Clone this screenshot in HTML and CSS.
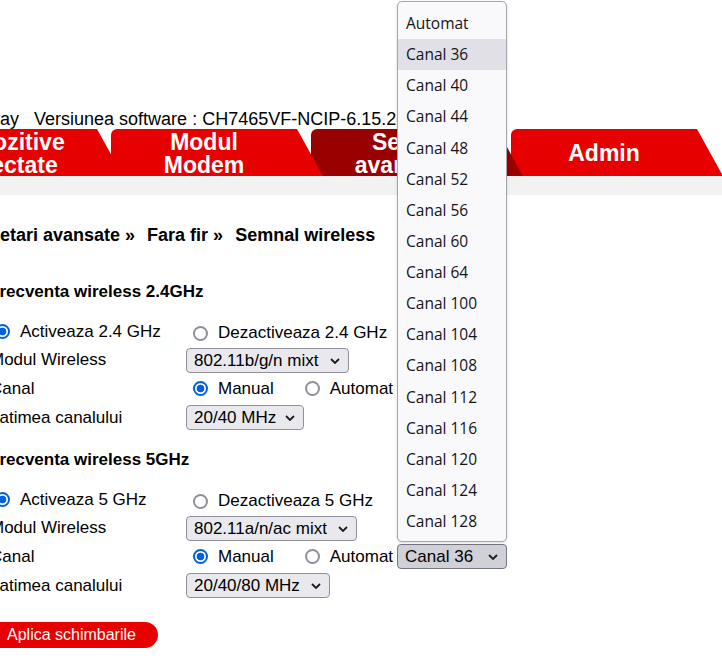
FILE: index.html
```html
<!DOCTYPE html>
<html lang="ro">
<head>
  <meta charset="UTF-8">
  <title>Semnal wireless</title>
  <link rel="stylesheet" href="styles.css">
</head>
<body>
  <div class="version">Gateway&nbsp;&nbsp;&nbsp;Versiunea software : CH7465VF-NCIP-6.15.28.109-NOSH</div>

  <nav class="tabs">
    <a class="tab t1">Dispozitive<br>conectate</a>
    <a class="tab t2">Modul<br>Modem</a>
    <a class="tab t3 active">Setari<br>avansate</a>
    <a class="tab t4 single">Admin</a>
  </nav>
  <div class="band"></div>

  <main class="content">
    <div class="crumbs">Setari avansate »<span class="sp"></span>Fara fir »<span class="sp"></span>Semnal wireless</div>

    <!-- 2.4 GHz -->
    <h3 class="freq first">Frecventa wireless 2.4GHz</h3>
    <div class="row r-radio">
      <div class="lbl"><label class="opt"><input type="radio" name="en24" checked>Activeaza 2.4 GHz</label></div>
      <label class="opt"><input type="radio" name="en24">Dezactiveaza 2.4 GHz</label>
    </div>
    <div class="row r-sel">
      <div class="lbl">Modul Wireless</div>
      <span class="sel"><select><option>802.11b/g/n mixt</option></select><svg class="chev" width="10" height="6" viewBox="0 0 10 6"><polyline points="1,1 5,5 9,1" fill="none" stroke="#1c1b22" stroke-width="1.8"/></svg></span>
    </div>
    <div class="row r-wide">
      <div class="lbl">Canal</div>
      <label class="opt"><input type="radio" name="ch24" checked>Manual</label>
      <label class="opt"><input type="radio" name="ch24">Automat</label>
    </div>
    <div class="row r-wide">
      <div class="lbl">Latimea canalului</div>
      <span class="sel"><select class="w-2040"><option>20/40 MHz</option></select><svg class="chev" width="10" height="6" viewBox="0 0 10 6"><polyline points="1,1 5,5 9,1" fill="none" stroke="#1c1b22" stroke-width="1.8"/></svg></span>
    </div>

    <!-- 5 GHz -->
    <h3 class="freq">Frecventa wireless 5GHz</h3>
    <div class="row r-radio">
      <div class="lbl"><label class="opt"><input type="radio" name="en5" checked>Activeaza 5 GHz</label></div>
      <label class="opt"><input type="radio" name="en5">Dezactiveaza 5 GHz</label>
    </div>
    <div class="row r-sel">
      <div class="lbl">Modul Wireless</div>
      <span class="sel"><select><option>802.11a/n/ac mixt</option></select><svg class="chev" width="10" height="6" viewBox="0 0 10 6"><polyline points="1,1 5,5 9,1" fill="none" stroke="#1c1b22" stroke-width="1.8"/></svg></span>
    </div>
    <div class="row r-wide">
      <div class="lbl">Canal</div>
      <label class="opt"><input type="radio" name="ch5" checked>Manual</label>
      <label class="opt"><input type="radio" name="ch5">Automat</label>
      <span class="sel open"><select class="w-canal"><option>Canal 36</option></select><svg class="chev" width="10" height="6" viewBox="0 0 10 6"><polyline points="1,1 5,5 9,1" fill="none" stroke="#1c1b22" stroke-width="1.8"/></svg></span>
    </div>
    <div class="row r-wide">
      <div class="lbl">Latimea canalului</div>
      <span class="sel"><select><option>20/40/80 MHz</option></select><svg class="chev" width="10" height="6" viewBox="0 0 10 6"><polyline points="1,1 5,5 9,1" fill="none" stroke="#1c1b22" stroke-width="1.8"/></svg></span>
    </div>

    <button class="apply">Aplica schimbarile</button>
  </main>

  <!-- lista deschisa a canalului 5GHz -->
  <ul class="popup">
    <li>Automat</li>
    <li class="hover">Canal 36</li>
    <li>Canal 40</li>
    <li>Canal 44</li>
    <li>Canal 48</li>
    <li>Canal 52</li>
    <li>Canal 56</li>
    <li>Canal 60</li>
    <li>Canal 64</li>
    <li>Canal 100</li>
    <li>Canal 104</li>
    <li>Canal 108</li>
    <li>Canal 112</li>
    <li>Canal 116</li>
    <li>Canal 120</li>
    <li>Canal 124</li>
    <li>Canal 128</li>
  </ul>
</body>
</html>
```

FILE: styles.css
```css
/* pagina router - semnal wireless */
body {
  margin: 0;
  font-family: "Liberation Sans", Arial, sans-serif;
  font-size: 17px;
  color: #000;
  background: #fff;
  overflow: hidden;
}
.version {
  margin: 109px 0 0 -52px;
  font-size: 18px;
  line-height: 20px;
  white-space: nowrap;
}

/* tab-uri */
.tabs {
  display: flex;
  margin-left: -89px;
  height: 47px;
}
.tab {
  flex: none;
  box-sizing: border-box;
  width: 212px;
  height: 47px;
  margin-right: -12px;
  padding: 2px 26px 0 0;
  background: #e60000;
  color: #fff;
  font-weight: bold;
  font-size: 23px;
  line-height: 23px;
  text-align: center;
  border-radius: 6px 6px 0 0;
  clip-path: polygon(0 0, 186px 0, 212px 100%, 0 100%);
}
.tab.single { line-height: 48px; padding-top: 0; }
.tab.active { background: #990000; }
.t1 { z-index: 4; }
.t2 { z-index: 3; }
.t3 { z-index: 2; }
.t4 { z-index: 1; }
.band {
  height: 19px;
  background: #f2f2f2;
}

/* continut */
.content {
  margin-left: -10px;
  line-height: 20px;
}
.crumbs {
  margin: 30px 0 0 -2px;
  font-weight: bold;
  font-size: 18px;
  white-space: nowrap;
}
.crumbs .sp {
  display: inline-block;
  width: 12px;
}
.freq {
  margin: 18px 0 0 -1px;
  font-size: 17px;
  line-height: 20px;
}
.freq.first { margin-top: 37px; }
.row {
  display: flex;
  align-items: center;
  white-space: nowrap;
}
.row.r-radio { height: 26px; margin-top: 18px; }
.row.r-sel { height: 28px; }
.row.r-wide { height: 29px; }
.lbl {
  flex: none;
  width: 196px;
}
.opt {
  display: inline-flex;
  align-items: center;
}
.opt + .opt { margin-left: 24px; }
.lbl .opt { margin-left: -2px; }

input[type=radio] {
  appearance: none;
  box-sizing: border-box;
  width: 15px;
  height: 15px;
  margin: 0 10px 0 7px;
  border: 2px solid #8f8f9d;
  border-radius: 50%;
  background: #fff;
}
input[type=radio]:checked {
  border-color: #0060df;
  background: radial-gradient(circle, #0060df 0 3.5px, #fff 4.2px);
}

/* select-uri */
.sel {
  position: relative;
  display: inline-block;
  height: 25px;
}
.sel select {
  appearance: none;
  box-sizing: border-box;
  height: 25px;
  padding: 0 29px 0 7px;
  border: 1px solid #8f8f9d;
  border-radius: 4px;
  background: #e9e9ed;
  font-family: "Liberation Sans", Arial, sans-serif;
  font-size: 17px;
  color: #000;
}
.sel .chev {
  position: absolute;
  right: 9px;
  top: 10px;
  pointer-events: none;
}
.sel select.w-2040 { padding-right: 26px; }
.sel.open { margin-left: 4px; }
.sel.open select {
  width: 110px;
  background: #d0d0d7;
  border-color: #767683;
}

.apply {
  margin: 22px 0 0 -2px;
  height: 26px;
  padding: 0 22px 0 19px;
  border: none;
  border-radius: 13px;
  background: #e60000;
  color: #fff;
  font-family: "Liberation Sans", Arial, sans-serif;
  font-size: 16px;
}

/* lista deschisa */
.popup {
  position: absolute;
  z-index: 10;
  left: 397px;
  top: 1px;
  width: 110px;
  box-sizing: border-box;
  margin: 0;
  padding: 6px 0 4px;
  list-style: none;
  background: #f9f9fb;
  border: 1px solid #a5a5ad;
  border-radius: 5px;
  box-shadow: 0 1px 3px rgba(0,0,0,0.15);
  font-family: "Open Sans", "Noto Sans", sans-serif;
  font-size: 15.5px;
  color: #15141a;
}
.popup li {
  height: 31.125px;
  line-height: 31px;
  padding-left: 8px;
}
.popup li.hover { background: #e0e0e6; }
```
